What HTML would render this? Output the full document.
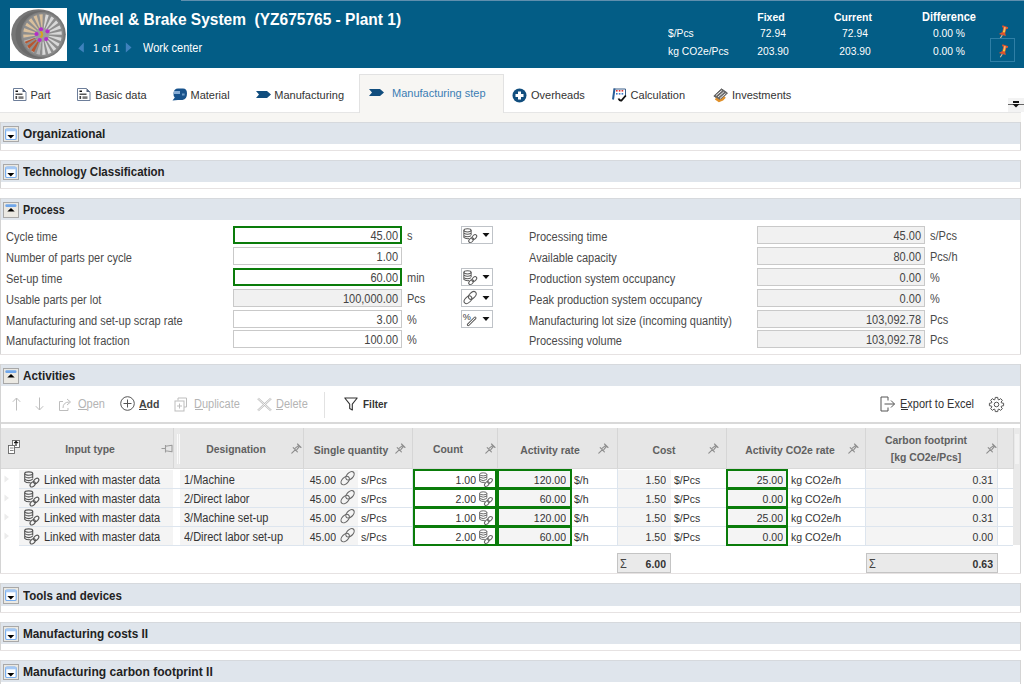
<!DOCTYPE html>
<html><head><meta charset="utf-8"><title>Manufacturing step</title>
<style>
html,body{margin:0;padding:0;}
body{width:1024px;height:684px;overflow:hidden;position:relative;background:#fff;font-family:"Liberation Sans", sans-serif;}
.t{position:absolute;white-space:nowrap;}
.r{position:absolute;}
svg.r{overflow:visible;}
</style></head><body>
<div class="r" style="left:0px;top:0px;width:1024px;height:68px;background:#035d86;"></div><div class="r" style="left:181px;top:0px;width:843px;height:1px;background:#5f8fae;"></div><div class="r" style="left:10px;top:8px;width:57px;height:53px;background:#fff;"></div><svg class="r" style="left:10px;top:8px;" width="57" height="53" viewBox="0 0 57 53"><g transform="translate(-10,-8)">
<ellipse cx="38.5" cy="34.2" rx="27.3" ry="25" fill="#767676"/>
<ellipse cx="39.5" cy="34.4" rx="24" ry="23.5" fill="#6a6a6a"/>
<ellipse cx="42.5" cy="34.6" rx="21.8" ry="22.8" fill="#7e7e7e"/>
<ellipse cx="42.5" cy="34.6" rx="20" ry="21" fill="#b4b4b4"/>
<path d="M43.60 27.41 L45.63 14.06 A20 20.8 0 0 1 39.37 55.14 L41.40 41.79 A7 7.28 0 0 0 43.60 27.41 Z" fill="#d8d8d8"/>
<path d="M35.59 35.74 L22.75 37.85 A20 20.8 0 0 1 45.63 14.06 L43.60 27.41 A7 7.28 0 0 0 35.59 35.74 Z" fill="#d9bf9c"/>
<path d="M39.56 42.34 L35.51 52.97 A19 19.76 0 0 1 24.83 41.87 L35.06 37.66 A8 8.32 0 0 0 39.56 42.34 Z" fill="#b8552e"/>
<path d="M49.00 34.53 L63.00 34.81 L62.77 37.79 L48.91 35.74 Z" fill="#8e8e8e"/><path d="M48.70 36.62 L61.93 41.39 L60.83 44.14 L48.25 37.75 Z" fill="#8e8e8e"/><path d="M47.80 38.52 L58.96 47.30 L57.10 49.57 L47.04 39.44 Z" fill="#8e8e8e"/><path d="M46.37 40.03 L54.38 51.97 L51.94 53.53 L45.38 40.66 Z" fill="#8e8e8e"/><path d="M44.57 41.01 L48.64 54.94 L45.85 55.63 L43.43 41.29 Z" fill="#8e8e8e"/><path d="M42.56 41.36 L42.30 55.92 L39.44 55.68 L41.40 41.26 Z" fill="#8e8e8e"/><path d="M40.55 41.05 L35.97 54.81 L33.32 53.66 L39.47 40.58 Z" fill="#8e8e8e"/><path d="M38.73 40.11 L30.29 51.72 L28.11 49.78 L37.84 39.32 Z" fill="#8e8e8e"/><path d="M37.28 38.63 L25.80 46.96 L24.30 44.41 L36.67 37.59 Z" fill="#8e8e8e"/><path d="M36.34 36.75 L22.94 40.99 L22.28 38.08 L36.07 35.57 Z" fill="#8e8e8e"/><path d="M36.00 34.67 L22.00 34.39 L22.23 31.41 L36.09 33.46 Z" fill="#8e8e8e"/><path d="M36.30 32.58 L23.07 27.81 L24.17 25.06 L36.75 31.45 Z" fill="#8e8e8e"/><path d="M37.20 30.68 L26.04 21.90 L27.90 19.63 L37.96 29.76 Z" fill="#8e8e8e"/><path d="M38.63 29.17 L30.62 17.23 L33.06 15.67 L39.62 28.54 Z" fill="#8e8e8e"/><path d="M40.43 28.19 L36.36 14.26 L39.15 13.57 L41.57 27.91 Z" fill="#8e8e8e"/><path d="M42.44 27.84 L42.70 13.28 L45.56 13.52 L43.60 27.94 Z" fill="#8e8e8e"/><path d="M44.45 28.15 L49.03 14.39 L51.68 15.54 L45.53 28.62 Z" fill="#8e8e8e"/><path d="M46.27 29.09 L54.71 17.48 L56.89 19.42 L47.16 29.88 Z" fill="#8e8e8e"/><path d="M47.72 30.57 L59.20 22.24 L60.70 24.79 L48.33 31.61 Z" fill="#8e8e8e"/><path d="M48.66 32.45 L62.06 28.21 L62.72 31.12 L48.93 33.63 Z" fill="#8e8e8e"/>
<ellipse cx="42.5" cy="34.6" rx="20" ry="21" fill="none" stroke="#8a8a8a" stroke-width="1.4"/>
<circle cx="42.0" cy="34.6" r="7" fill="#9c9c9c"/>
<circle cx="41" cy="29.3" r="2.1" fill="#b42cc8"/><circle cx="47.5" cy="31.3" r="2.1" fill="#b42cc8"/><circle cx="46.2" cy="39" r="2.1" fill="#b42cc8"/><circle cx="39.6" cy="40" r="2.1" fill="#b42cc8"/><circle cx="36.5" cy="34" r="2.1" fill="#b42cc8"/>
<path d="M40.5 31.5 Q44 34.5 40.5 37.5" stroke="#d8a020" stroke-width="2" fill="none"/>
</g></svg><div class="t" style="top:9px;font-size:16.0px;line-height:22px;color:#fff;font-weight:bold;left:77.5px;transform-origin:0 0;transform:scaleX(0.9688);">Wheel &amp; Brake System  (YZ675765 - Plant 1)</div><svg class="r" style="left:78px;top:42px;" width="7" height="11" viewBox="0 0 7 11"><path d="M5.8 0.5 L0.3 6.5 L5.8 10.5 Z" fill="#3f82bd"/></svg><svg class="r" style="left:125px;top:42px;" width="7" height="11" viewBox="0 0 7 11"><path d="M0.8 0.5 L6.5 5.5 L0.8 10.5 Z" fill="#3f82bd"/></svg><div class="t" style="top:40px;font-size:11.5px;line-height:16px;color:#fff;left:92.5px;transform-origin:0 0;transform:scaleX(0.9130);">1 of 1</div><div class="t" style="top:40px;font-size:12.0px;line-height:17px;color:#fff;left:143px;transform-origin:0 0;transform:scaleX(0.9167);">Work center</div><div class="t" style="top:9px;font-size:11.5px;line-height:16px;color:#fff;font-weight:bold;left:721.0px;width:100px;text-align:center;transform-origin:50% 0;transform:scaleX(0.9130);">Fixed</div><div class="t" style="top:9px;font-size:11.5px;line-height:16px;color:#fff;font-weight:bold;left:802.5px;width:100px;text-align:center;transform-origin:50% 0;transform:scaleX(0.9130);">Current</div><div class="t" style="top:9px;font-size:12.0px;line-height:17px;color:#fff;font-weight:bold;left:899.0px;width:100px;text-align:center;transform-origin:50% 0;transform:scaleX(0.9167);">Difference</div><div class="t" style="top:25px;font-size:11.25px;line-height:16px;color:#fff;left:667.5px;transform-origin:0 0;transform:scaleX(0.9156);">$/Pcs</div><div class="t" style="top:43px;font-size:11.25px;line-height:16px;color:#fff;left:667.5px;transform-origin:0 0;transform:scaleX(0.9156);">kg CO2e/Pcs</div><div class="t" style="top:25px;font-size:11.25px;line-height:16px;color:#fff;left:722.5px;width:100px;text-align:center;transform-origin:50% 0;transform:scaleX(0.9156);">72.94</div><div class="t" style="top:43px;font-size:11.25px;line-height:16px;color:#fff;left:722.5px;width:100px;text-align:center;transform-origin:50% 0;transform:scaleX(0.9156);">203.90</div><div class="t" style="top:25px;font-size:11.25px;line-height:16px;color:#fff;left:804.5px;width:100px;text-align:center;transform-origin:50% 0;transform:scaleX(0.9156);">72.94</div><div class="t" style="top:43px;font-size:11.25px;line-height:16px;color:#fff;left:804.5px;width:100px;text-align:center;transform-origin:50% 0;transform:scaleX(0.9156);">203.90</div><div class="t" style="top:25px;font-size:11.25px;line-height:16px;color:#fff;left:899.0px;width:100px;text-align:center;transform-origin:50% 0;transform:scaleX(0.9156);">0.00 %</div><div class="t" style="top:43px;font-size:11.25px;line-height:16px;color:#fff;left:899.0px;width:100px;text-align:center;transform-origin:50% 0;transform:scaleX(0.9156);">0.00 %</div><svg class="r" style="left:994px;top:22px;" width="18" height="18" viewBox="0 0 18 18"><path d="M8.3 13 L6.3 16.2" stroke="#dcb898" stroke-width="1.1"/><path d="M8.5 3.2 L14.2 5.2 L13.6 7 L12.3 7 L11.2 11 L11.8 14 L4.8 12 L8.4 10 L9.2 5.8 L8 5 Z" fill="#e0552c"/><path d="M11 5.2 L10.1 9.8" stroke="#e6c17c" stroke-width="1.6"/><circle cx="10" cy="9.5" r="1.1" fill="#eed040"/></svg><div class="r" style="left:990px;top:38px;width:25px;height:24px;border:1px solid #2f7fa6;box-sizing:border-box;"></div><svg class="r" style="left:994px;top:40.5px;" width="18" height="18" viewBox="0 0 18 18"><path d="M8.3 13 L6.3 16.2" stroke="#dcb898" stroke-width="1.1"/><path d="M8.5 3.2 L14.2 5.2 L13.6 7 L12.3 7 L11.2 11 L11.8 14 L4.8 12 L8.4 10 L9.2 5.8 L8 5 Z" fill="#e0552c"/><path d="M11 5.2 L10.1 9.8" stroke="#e6c17c" stroke-width="1.6"/><circle cx="10" cy="9.5" r="1.1" fill="#eed040"/></svg><div class="r" style="left:0px;top:68px;width:1024px;height:44px;background:#fff;"></div><div class="r" style="left:0px;top:112px;width:1024px;height:1px;background:#e6e6e6;"></div><div class="r" style="left:0px;top:113px;width:1021px;height:9px;background:#f7f6f3;"></div><div class="r" style="left:359px;top:74px;width:145px;height:39px;background:#f7f6f3;border:1px solid #e2e2e2;border-bottom:none;box-sizing:border-box;"></div><svg class="r" style="left:12.5px;top:88px;" width="14" height="13" viewBox="0 0 14 13"><path d="M0.5 0.5 H9.5 L13 4 V12.5 H0.5 Z" fill="#fff" stroke="#6d7e9a" stroke-width="1"/><path d="M9.5 0.5 L13 4 H9.5 Z" fill="#56647c"/><rect x="2.5" y="2.5" width="2.5" height="1.5" fill="#111"/><rect x="2.5" y="5.5" width="7" height="1.5" fill="#555"/><rect x="2.5" y="8" width="1.6" height="3" fill="#444"/><rect x="5.5" y="8.3" width="5" height="2.6" fill="#777"/></svg><div class="t" style="top:88px;font-size:11.0px;line-height:15px;color:#333;left:30.5px;transform-origin:0 0;">Part</div><svg class="r" style="left:76.5px;top:88px;" width="14" height="13" viewBox="0 0 14 13"><path d="M0.5 0.5 H9.5 L13 4 V12.5 H0.5 Z" fill="#fff" stroke="#6d7e9a" stroke-width="1"/><path d="M9.5 0.5 L13 4 H9.5 Z" fill="#56647c"/><rect x="2.5" y="2.5" width="2.5" height="1.5" fill="#111"/><rect x="2.5" y="5.5" width="7" height="1.5" fill="#555"/><rect x="2.5" y="8" width="1.6" height="3" fill="#444"/><rect x="5.5" y="8.3" width="5" height="2.6" fill="#777"/></svg><div class="t" style="top:88px;font-size:11.0px;line-height:15px;color:#333;left:95.3px;transform-origin:0 0;">Basic data</div><svg class="r" style="left:172px;top:88px;" width="15" height="13" viewBox="0 0 15 13"><path d="M6 0.5 H11 Q15 0.5 15 5.5 Q15 11 10.5 12 H6 L0.5 12.5 L2.8 9.5 Q1.2 8 1.5 5 Q2 0.5 6 0.5 Z" fill="#17528c"/><rect x="2" y="3" width="6" height="3" fill="#86acd6"/><rect x="10" y="5.5" width="2.6" height="2" fill="#6f9cc8"/></svg><div class="t" style="top:88px;font-size:11.0px;line-height:15px;color:#333;left:190.5px;transform-origin:0 0;">Material</div><svg class="r" style="left:255.5px;top:91px;" width="15" height="7" viewBox="0 0 15 7"><path d="M0 0 H11 L15 3.5 L11 7 H0 L3 3.5 Z" fill="#114e7e"/></svg><div class="t" style="top:88px;font-size:11.0px;line-height:15px;color:#333;left:274.3px;transform-origin:0 0;">Manufacturing</div><svg class="r" style="left:369.3px;top:89px;" width="15" height="7" viewBox="0 0 15 7"><path d="M0 0 H11 L15 3.5 L11 7 H0 L3 3.5 Z" fill="#114e7e"/></svg><div class="t" style="top:86px;font-size:11.0px;line-height:15px;color:#3b7db4;left:392px;transform-origin:0 0;">Manufacturing step</div><svg class="r" style="left:512px;top:88px;" width="15" height="15" viewBox="0 0 15 15"><circle cx="7.5" cy="7.5" r="7" fill="#114e7e"/><path d="M6 3.5 H9 V6 H11.5 V9 H9 V11.5 H6 V9 H3.5 V6 H6 Z" fill="#fff"/></svg><div class="t" style="top:88px;font-size:11.0px;line-height:15px;color:#333;left:531px;transform-origin:0 0;">Overheads</div><svg class="r" style="left:612px;top:88px;" width="15" height="14" viewBox="0 0 15 14"><path d="M2.5 0.5 L1 11.5" stroke="#2a5e9a" stroke-width="2"/><path d="M1.8 1 H13.5 V9" stroke="#3a5f8a" stroke-width="1" fill="none"/><rect x="4" y="2" width="1.6" height="1.6" fill="#d33"/><rect x="6.8" y="2" width="1.6" height="1.6" fill="#d33"/><rect x="9.6" y="2" width="1.6" height="1.6" fill="#d33"/><rect x="4" y="5" width="1.6" height="1.6" fill="#3a78c8"/><rect x="6.8" y="5" width="1.6" height="1.6" fill="#3a78c8"/><rect x="9.6" y="5" width="1.6" height="1.6" fill="#3a78c8"/><path d="M6.5 10.5 Q7.5 13 9.5 12.5 L13.8 7.5" stroke="#111" stroke-width="1.9" fill="none"/></svg><div class="t" style="top:88px;font-size:11.0px;line-height:15px;color:#333;left:630.6px;transform-origin:0 0;">Calculation</div><svg class="r" style="left:712.5px;top:87.5px;" width="15" height="14" viewBox="0 0 15 14"><path d="M0.8 8 L8.5 0.8 L14.5 5 L7 12.5 Z" fill="#6a6a6a" stroke="#555" stroke-width="0.8"/><path d="M3 7.5 L8.8 2.5 M5 9 L10.8 4 M7 10.5 L12.5 5.5" stroke="#f2f2f2" stroke-width="1"/><path d="M2.5 10.5 L6 13 L9.5 11.5 L12 9" stroke="#e0902a" stroke-width="2.2" fill="none"/></svg><div class="t" style="top:88px;font-size:11.0px;line-height:15px;color:#333;left:732px;transform-origin:0 0;">Investments</div><div class="r" style="left:1008px;top:98px;width:16px;height:14px;background:#f3f3f3;"></div><div class="r" style="left:1013px;top:101px;width:6px;height:2px;background:#111;"></div><div class="r" style="left:1008px;top:104px;width:16px;height:1px;background:#666;"></div><svg class="r" style="left:1012px;top:104px;" width="8" height="4" viewBox="0 0 8 4"><path d="M0.5 0 H7.5 L4 3.5 Z" fill="#111"/></svg><div class="r" style="left:1021px;top:112px;width:3px;height:572px;background:#fff;"></div><div class="r" style="left:0px;top:122px;width:1021px;height:1px;background:#d6d9dd;"></div><div class="r" style="left:0px;top:123px;width:1021px;height:21px;background:#dfe5ec;"></div><div class="r" style="left:0px;top:144px;width:1021px;height:6px;background:#fff;"></div><div class="r" style="left:0px;top:122px;width:1px;height:28px;background:#d4d4d4;"></div><div class="r" style="left:1020px;top:122px;width:1px;height:28px;background:#d4d4d4;"></div><div class="r" style="left:0px;top:150px;width:1021px;height:1px;background:#e6e2e2;"></div><div class="r" style="left:3px;top:126px;width:16px;height:16px;background:#ebe9e3;border:1px solid #a8a8a8;box-sizing:border-box;"></div><svg class="r" style="left:3px;top:126px;" width="16" height="16" viewBox="0 0 16 16"><rect x="2.6" y="3.1" width="10.6" height="10.4" rx="1.3" fill="#fff" stroke="#78aef0" stroke-width="1.2"/><rect x="2.6" y="3.1" width="10.6" height="2.2" fill="#a6c9f4"/><path d="M4.3 9 H11.3 L7.8 12.6 Z" fill="#000"/></svg><div class="t" style="top:125px;font-size:12.5px;line-height:18px;color:#222;font-weight:bold;left:23px;transform-origin:0 0;transform:scaleX(0.9476);">Organizational</div><div class="r" style="left:0px;top:160px;width:1021px;height:1px;background:#d6d9dd;"></div><div class="r" style="left:0px;top:161px;width:1021px;height:21px;background:#dfe5ec;"></div><div class="r" style="left:0px;top:182px;width:1021px;height:6px;background:#fff;"></div><div class="r" style="left:0px;top:160px;width:1px;height:28px;background:#d4d4d4;"></div><div class="r" style="left:1020px;top:160px;width:1px;height:28px;background:#d4d4d4;"></div><div class="r" style="left:0px;top:188px;width:1021px;height:1px;background:#e6e2e2;"></div><div class="r" style="left:3px;top:164px;width:16px;height:16px;background:#ebe9e3;border:1px solid #a8a8a8;box-sizing:border-box;"></div><svg class="r" style="left:3px;top:164px;" width="16" height="16" viewBox="0 0 16 16"><rect x="2.6" y="3.1" width="10.6" height="10.4" rx="1.3" fill="#fff" stroke="#78aef0" stroke-width="1.2"/><rect x="2.6" y="3.1" width="10.6" height="2.2" fill="#a6c9f4"/><path d="M4.3 9 H11.3 L7.8 12.6 Z" fill="#000"/></svg><div class="t" style="top:163px;font-size:12.5px;line-height:18px;color:#222;font-weight:bold;left:23px;transform-origin:0 0;transform:scaleX(0.9200);">Technology Classification</div><div class="r" style="left:0px;top:198px;width:1021px;height:1px;background:#d6d9dd;"></div><div class="r" style="left:0px;top:199px;width:1021px;height:21px;background:#dfe5ec;"></div><div class="r" style="left:0px;top:220px;width:1021px;height:134px;background:#fff;"></div><div class="r" style="left:0px;top:198px;width:1px;height:156px;background:#d4d4d4;"></div><div class="r" style="left:1020px;top:198px;width:1px;height:156px;background:#d4d4d4;"></div><div class="r" style="left:0px;top:354px;width:1021px;height:1px;background:#e6e2e2;"></div><div class="r" style="left:3px;top:202px;width:16px;height:16px;background:#ebe9e3;border:1px solid #a8a8a8;box-sizing:border-box;"></div><svg class="r" style="left:3px;top:202px;" width="16" height="16" viewBox="0 0 16 16"><rect x="2.3" y="2.3" width="11.2" height="2.6" rx="1.2" fill="#6fa6ea"/><path d="M4.3 9.6 H11.7 L8 6 Z" fill="#000"/></svg><div class="t" style="top:201px;font-size:12.5px;line-height:18px;color:#222;font-weight:bold;left:23px;transform-origin:0 0;transform:scaleX(0.8556);">Process</div><div class="r" style="left:0px;top:364px;width:1021px;height:1px;background:#d6d9dd;"></div><div class="r" style="left:0px;top:365px;width:1021px;height:21px;background:#dfe5ec;"></div><div class="r" style="left:0px;top:386px;width:1021px;height:187px;background:#fff;"></div><div class="r" style="left:0px;top:364px;width:1px;height:209px;background:#d4d4d4;"></div><div class="r" style="left:1020px;top:364px;width:1px;height:209px;background:#d4d4d4;"></div><div class="r" style="left:0px;top:573px;width:1021px;height:1px;background:#e6e2e2;"></div><div class="r" style="left:3px;top:368px;width:16px;height:16px;background:#ebe9e3;border:1px solid #a8a8a8;box-sizing:border-box;"></div><svg class="r" style="left:3px;top:368px;" width="16" height="16" viewBox="0 0 16 16"><rect x="2.3" y="2.3" width="11.2" height="2.6" rx="1.2" fill="#6fa6ea"/><path d="M4.3 9.6 H11.7 L8 6 Z" fill="#000"/></svg><div class="t" style="top:367px;font-size:12.5px;line-height:18px;color:#222;font-weight:bold;left:23px;transform-origin:0 0;transform:scaleX(0.9384);">Activities</div><div class="r" style="left:0px;top:583px;width:1021px;height:1px;background:#d6d9dd;"></div><div class="r" style="left:0px;top:584px;width:1021px;height:22px;background:#dfe5ec;"></div><div class="r" style="left:0px;top:606px;width:1021px;height:6px;background:#fff;"></div><div class="r" style="left:0px;top:583px;width:1px;height:29px;background:#d4d4d4;"></div><div class="r" style="left:1020px;top:583px;width:1px;height:29px;background:#d4d4d4;"></div><div class="r" style="left:0px;top:612px;width:1021px;height:1px;background:#e6e2e2;"></div><div class="r" style="left:3px;top:587px;width:16px;height:17px;background:#ebe9e3;border:1px solid #a8a8a8;box-sizing:border-box;"></div><svg class="r" style="left:3px;top:587px;" width="16" height="16" viewBox="0 0 16 16"><rect x="2.6" y="3.1" width="10.6" height="10.4" rx="1.3" fill="#fff" stroke="#78aef0" stroke-width="1.2"/><rect x="2.6" y="3.1" width="10.6" height="2.2" fill="#a6c9f4"/><path d="M4.3 9 H11.3 L7.8 12.6 Z" fill="#000"/></svg><div class="t" style="top:587px;font-size:12.5px;line-height:18px;color:#222;font-weight:bold;left:23px;transform-origin:0 0;transform:scaleX(0.9200);">Tools and devices</div><div class="r" style="left:0px;top:622px;width:1021px;height:1px;background:#d6d9dd;"></div><div class="r" style="left:0px;top:623px;width:1021px;height:21px;background:#dfe5ec;"></div><div class="r" style="left:0px;top:644px;width:1021px;height:6px;background:#fff;"></div><div class="r" style="left:0px;top:622px;width:1px;height:28px;background:#d4d4d4;"></div><div class="r" style="left:1020px;top:622px;width:1px;height:28px;background:#d4d4d4;"></div><div class="r" style="left:0px;top:650px;width:1021px;height:1px;background:#e6e2e2;"></div><div class="r" style="left:3px;top:626px;width:16px;height:16px;background:#ebe9e3;border:1px solid #a8a8a8;box-sizing:border-box;"></div><svg class="r" style="left:3px;top:626px;" width="16" height="16" viewBox="0 0 16 16"><rect x="2.6" y="3.1" width="10.6" height="10.4" rx="1.3" fill="#fff" stroke="#78aef0" stroke-width="1.2"/><rect x="2.6" y="3.1" width="10.6" height="2.2" fill="#a6c9f4"/><path d="M4.3 9 H11.3 L7.8 12.6 Z" fill="#000"/></svg><div class="t" style="top:625px;font-size:12.5px;line-height:18px;color:#222;font-weight:bold;left:23px;transform-origin:0 0;transform:scaleX(0.9430);">Manufacturing costs II</div><div class="r" style="left:0px;top:660px;width:1021px;height:1px;background:#d6d9dd;"></div><div class="r" style="left:0px;top:661px;width:1021px;height:21px;background:#dfe5ec;"></div><div class="r" style="left:0px;top:682px;width:1021px;height:6px;background:#fff;"></div><div class="r" style="left:0px;top:660px;width:1px;height:28px;background:#d4d4d4;"></div><div class="r" style="left:1020px;top:660px;width:1px;height:28px;background:#d4d4d4;"></div><div class="r" style="left:0px;top:688px;width:1021px;height:1px;background:#e6e2e2;"></div><div class="r" style="left:3px;top:664px;width:16px;height:16px;background:#ebe9e3;border:1px solid #a8a8a8;box-sizing:border-box;"></div><svg class="r" style="left:3px;top:664px;" width="16" height="16" viewBox="0 0 16 16"><rect x="2.6" y="3.1" width="10.6" height="10.4" rx="1.3" fill="#fff" stroke="#78aef0" stroke-width="1.2"/><rect x="2.6" y="3.1" width="10.6" height="2.2" fill="#a6c9f4"/><path d="M4.3 9 H11.3 L7.8 12.6 Z" fill="#000"/></svg><div class="t" style="top:663px;font-size:12.5px;line-height:18px;color:#222;font-weight:bold;left:23px;transform-origin:0 0;transform:scaleX(0.9660);">Manufacturing carbon footprint II</div><div class="t" style="top:229px;font-size:12.0px;line-height:17px;color:#4a4a4a;left:5.5px;transform-origin:0 0;transform:scaleX(0.9167);">Cycle time</div><div class="r" style="left:233px;top:226px;width:169px;height:18px;background:#fff;border:2px solid #0a7c0a;box-sizing:border-box;"></div><div class="t" style="top:228px;font-size:12.0px;line-height:17px;color:#444;left:238px;width:160px;text-align:right;transform-origin:100% 0;transform:scaleX(0.9167);">45.00</div><div class="t" style="top:228px;font-size:12.0px;line-height:17px;color:#4a4a4a;left:407px;transform-origin:0 0;transform:scaleX(0.9167);">s</div><div class="r" style="left:461px;top:226px;width:32px;height:18px;background:#fff;border:1px solid #bfc3c8;box-sizing:border-box;"></div><svg class="r" style="left:463px;top:227.5px;" width="15" height="15.5" viewBox="0 0 16 17"><g fill="none" stroke="#5a5a5a" stroke-width="1.1"><ellipse cx="4.7" cy="2.6" rx="4" ry="1.7"/><path d="M0.7 2.6 V10.3 Q2.5 12 6.5 11.6 M8.7 2.6 V7.6 M0.7 5.6 Q4.7 8.2 8.7 5.6 M0.7 8.3 Q4.7 10.9 8.7 8.3"/><ellipse cx="8.7" cy="13.4" rx="3.1" ry="2" transform="rotate(-45 8.7 13.4)"/><ellipse cx="12.2" cy="9.9" rx="3.1" ry="2" transform="rotate(-45 12.2 9.9)"/></g></svg><svg class="r" style="left:482px;top:233px;" width="8" height="4" viewBox="0 0 8 4"><path d="M0.5 0 H7.5 L4 4 Z" fill="#111"/></svg><div class="t" style="top:250px;font-size:12.0px;line-height:17px;color:#4a4a4a;left:5.5px;transform-origin:0 0;transform:scaleX(0.9167);">Number of parts per cycle</div><div class="r" style="left:233px;top:247px;width:169px;height:18px;background:#fff;border:1px solid #c9c9c9;box-sizing:border-box;"></div><div class="t" style="top:249px;font-size:12.0px;line-height:17px;color:#444;left:238px;width:160px;text-align:right;transform-origin:100% 0;transform:scaleX(0.9167);">1.00</div><div class="t" style="top:271px;font-size:12.0px;line-height:17px;color:#4a4a4a;left:5.5px;transform-origin:0 0;transform:scaleX(0.9167);">Set-up time</div><div class="r" style="left:233px;top:268px;width:169px;height:18px;background:#fff;border:2px solid #0a7c0a;box-sizing:border-box;"></div><div class="t" style="top:270px;font-size:12.0px;line-height:17px;color:#444;left:238px;width:160px;text-align:right;transform-origin:100% 0;transform:scaleX(0.9167);">60.00</div><div class="t" style="top:270px;font-size:12.0px;line-height:17px;color:#4a4a4a;left:407px;transform-origin:0 0;transform:scaleX(0.9167);">min</div><div class="r" style="left:461px;top:268px;width:32px;height:18px;background:#fff;border:1px solid #bfc3c8;box-sizing:border-box;"></div><svg class="r" style="left:463px;top:269.5px;" width="15" height="15.5" viewBox="0 0 16 17"><g fill="none" stroke="#5a5a5a" stroke-width="1.1"><ellipse cx="4.7" cy="2.6" rx="4" ry="1.7"/><path d="M0.7 2.6 V10.3 Q2.5 12 6.5 11.6 M8.7 2.6 V7.6 M0.7 5.6 Q4.7 8.2 8.7 5.6 M0.7 8.3 Q4.7 10.9 8.7 8.3"/><ellipse cx="8.7" cy="13.4" rx="3.1" ry="2" transform="rotate(-45 8.7 13.4)"/><ellipse cx="12.2" cy="9.9" rx="3.1" ry="2" transform="rotate(-45 12.2 9.9)"/></g></svg><svg class="r" style="left:482px;top:275px;" width="8" height="4" viewBox="0 0 8 4"><path d="M0.5 0 H7.5 L4 4 Z" fill="#111"/></svg><div class="t" style="top:292px;font-size:12.0px;line-height:17px;color:#4a4a4a;left:5.5px;transform-origin:0 0;transform:scaleX(0.9167);">Usable parts per lot</div><div class="r" style="left:233px;top:289px;width:169px;height:18px;background:#f1f1f1;border:1px solid #c9c9c9;box-sizing:border-box;"></div><div class="t" style="top:291px;font-size:12.0px;line-height:17px;color:#444;left:238px;width:160px;text-align:right;transform-origin:100% 0;transform:scaleX(0.9167);">100,000.00</div><div class="t" style="top:291px;font-size:12.0px;line-height:17px;color:#4a4a4a;left:407px;transform-origin:0 0;transform:scaleX(0.9167);">Pcs</div><div class="r" style="left:461px;top:289px;width:32px;height:18px;background:#fff;border:1px solid #bfc3c8;box-sizing:border-box;"></div><svg class="r" style="left:463px;top:290.5px;" width="15" height="15.5" viewBox="0 0 16 17"><g fill="none" stroke="#5a5a5a" stroke-width="1.15"><ellipse cx="5.2" cy="9.6" rx="5" ry="3.1" transform="rotate(-45 5.2 9.6)"/><ellipse cx="10" cy="4.8" rx="5" ry="3.1" transform="rotate(-45 10 4.8)"/></g></svg><svg class="r" style="left:482px;top:296px;" width="8" height="4" viewBox="0 0 8 4"><path d="M0.5 0 H7.5 L4 4 Z" fill="#111"/></svg><div class="t" style="top:313px;font-size:12.0px;line-height:17px;color:#4a4a4a;left:5.5px;transform-origin:0 0;transform:scaleX(0.9167);">Manufacturing and set-up scrap rate</div><div class="r" style="left:233px;top:310px;width:169px;height:18px;background:#fff;border:1px solid #c9c9c9;box-sizing:border-box;"></div><div class="t" style="top:312px;font-size:12.0px;line-height:17px;color:#444;left:238px;width:160px;text-align:right;transform-origin:100% 0;transform:scaleX(0.9167);">3.00</div><div class="t" style="top:312px;font-size:12.0px;line-height:17px;color:#4a4a4a;left:407px;transform-origin:0 0;transform:scaleX(0.9167);">%</div><div class="r" style="left:461px;top:310px;width:32px;height:18px;background:#fff;border:1px solid #bfc3c8;box-sizing:border-box;"></div><svg class="r" style="left:463px;top:311.5px;" width="15" height="15.5" viewBox="0 0 16 17"><text x="-0.5" y="8.5" font-size="10" font-family="Liberation Sans" fill="#333">%</text><path d="M5.5 14 L13 6.5" stroke="#444" stroke-width="3" stroke-linecap="round"/><path d="M5.5 14 L13 6.5" stroke="#fff" stroke-width="1.2" stroke-linecap="round"/></svg><svg class="r" style="left:482px;top:317px;" width="8" height="4" viewBox="0 0 8 4"><path d="M0.5 0 H7.5 L4 4 Z" fill="#111"/></svg><div class="t" style="top:333px;font-size:12.0px;line-height:17px;color:#4a4a4a;left:5.5px;transform-origin:0 0;transform:scaleX(0.9167);">Manufacturing lot fraction</div><div class="r" style="left:233px;top:330px;width:169px;height:18px;background:#fff;border:1px solid #c9c9c9;box-sizing:border-box;"></div><div class="t" style="top:332px;font-size:12.0px;line-height:17px;color:#444;left:238px;width:160px;text-align:right;transform-origin:100% 0;transform:scaleX(0.9167);">100.00</div><div class="t" style="top:332px;font-size:12.0px;line-height:17px;color:#4a4a4a;left:407px;transform-origin:0 0;transform:scaleX(0.9167);">%</div><div class="t" style="top:229px;font-size:12.0px;line-height:17px;color:#4a4a4a;left:529px;transform-origin:0 0;transform:scaleX(0.9167);">Processing time</div><div class="r" style="left:757px;top:226px;width:168px;height:18px;background:#f1f1f1;border:1px solid #c9c9c9;box-sizing:border-box;"></div><div class="t" style="top:228px;font-size:12.0px;line-height:17px;color:#444;left:761px;width:160px;text-align:right;transform-origin:100% 0;transform:scaleX(0.9167);">45.00</div><div class="t" style="top:228px;font-size:12.0px;line-height:17px;color:#4a4a4a;left:930px;transform-origin:0 0;transform:scaleX(0.9167);">s/Pcs</div><div class="t" style="top:250px;font-size:12.0px;line-height:17px;color:#4a4a4a;left:529px;transform-origin:0 0;transform:scaleX(0.9167);">Available capacity</div><div class="r" style="left:757px;top:247px;width:168px;height:18px;background:#f1f1f1;border:1px solid #c9c9c9;box-sizing:border-box;"></div><div class="t" style="top:249px;font-size:12.0px;line-height:17px;color:#444;left:761px;width:160px;text-align:right;transform-origin:100% 0;transform:scaleX(0.9167);">80.00</div><div class="t" style="top:249px;font-size:12.0px;line-height:17px;color:#4a4a4a;left:930px;transform-origin:0 0;transform:scaleX(0.9167);">Pcs/h</div><div class="t" style="top:271px;font-size:12.0px;line-height:17px;color:#4a4a4a;left:529px;transform-origin:0 0;transform:scaleX(0.9167);">Production system occupancy</div><div class="r" style="left:757px;top:268px;width:168px;height:18px;background:#f1f1f1;border:1px solid #c9c9c9;box-sizing:border-box;"></div><div class="t" style="top:270px;font-size:12.0px;line-height:17px;color:#444;left:761px;width:160px;text-align:right;transform-origin:100% 0;transform:scaleX(0.9167);">0.00</div><div class="t" style="top:270px;font-size:12.0px;line-height:17px;color:#4a4a4a;left:930px;transform-origin:0 0;transform:scaleX(0.9167);">%</div><div class="t" style="top:292px;font-size:12.0px;line-height:17px;color:#4a4a4a;left:529px;transform-origin:0 0;transform:scaleX(0.9167);">Peak production system occupancy</div><div class="r" style="left:757px;top:289px;width:168px;height:18px;background:#f1f1f1;border:1px solid #c9c9c9;box-sizing:border-box;"></div><div class="t" style="top:291px;font-size:12.0px;line-height:17px;color:#444;left:761px;width:160px;text-align:right;transform-origin:100% 0;transform:scaleX(0.9167);">0.00</div><div class="t" style="top:291px;font-size:12.0px;line-height:17px;color:#4a4a4a;left:930px;transform-origin:0 0;transform:scaleX(0.9167);">%</div><div class="t" style="top:313px;font-size:12.0px;line-height:17px;color:#4a4a4a;left:529px;transform-origin:0 0;transform:scaleX(0.9167);">Manufacturing lot size (incoming quantity)</div><div class="r" style="left:757px;top:310px;width:168px;height:18px;background:#f1f1f1;border:1px solid #c9c9c9;box-sizing:border-box;"></div><div class="t" style="top:312px;font-size:12.0px;line-height:17px;color:#444;left:761px;width:160px;text-align:right;transform-origin:100% 0;transform:scaleX(0.9167);">103,092.78</div><div class="t" style="top:312px;font-size:12.0px;line-height:17px;color:#4a4a4a;left:930px;transform-origin:0 0;transform:scaleX(0.9167);">Pcs</div><div class="t" style="top:333px;font-size:12.0px;line-height:17px;color:#4a4a4a;left:529px;transform-origin:0 0;transform:scaleX(0.9167);">Processing volume</div><div class="r" style="left:757px;top:330px;width:168px;height:18px;background:#f1f1f1;border:1px solid #c9c9c9;box-sizing:border-box;"></div><div class="t" style="top:332px;font-size:12.0px;line-height:17px;color:#444;left:761px;width:160px;text-align:right;transform-origin:100% 0;transform:scaleX(0.9167);">103,092.78</div><div class="t" style="top:332px;font-size:12.0px;line-height:17px;color:#4a4a4a;left:930px;transform-origin:0 0;transform:scaleX(0.9167);">Pcs</div><svg class="r" style="left:12px;top:397px;" width="9" height="14" viewBox="0 0 9 14"><path d="M4.5 1 V13.5 M0.8 4.8 L4.5 1 L8.2 4.8" fill="none" stroke="#bdbdbd" stroke-width="1"/></svg><svg class="r" style="left:35px;top:397px;" width="9" height="14" viewBox="0 0 9 14"><path d="M4.5 0.5 V13 M0.8 9.2 L4.5 13 L8.2 9.2" fill="none" stroke="#bdbdbd" stroke-width="1"/></svg><svg class="r" style="left:58px;top:397px;" width="16" height="15" viewBox="0 0 16 15"><path d="M5 4.5 H1.5 V13.5 H10 V11" fill="none" stroke="#bdbdbd" stroke-width="1"/><path d="M5 11 Q5 5 11.5 5 M9 2 L12.5 5 L9 8" fill="none" stroke="#bdbdbd" stroke-width="1"/></svg><div class="t" style="top:396px;font-size:12.0px;line-height:17px;color:#b4b4b4;left:77.5px;transform-origin:0 0;transform:scaleX(0.9167);">Open</div><div class="r" style="left:78px;top:409px;width:9px;height:1px;background:#b4b4b4;"></div><svg class="r" style="left:120px;top:396px;" width="15" height="15" viewBox="0 0 15 15"><circle cx="7.5" cy="7.5" r="6.8" fill="none" stroke="#555" stroke-width="1"/><path d="M7.5 3.5 V11.5 M3.5 7.5 H11.5" stroke="#555" stroke-width="1"/></svg><div class="t" style="top:396px;font-size:11.5px;line-height:16px;color:#444;font-weight:bold;left:139px;transform-origin:0 0;transform:scaleX(0.9130);">Add</div><div class="r" style="left:139px;top:409px;width:8px;height:1px;background:#444;"></div><svg class="r" style="left:174px;top:397px;" width="16" height="15" viewBox="0 0 16 15"><path d="M4 3.5 V1 H12.5 V10 H10" fill="none" stroke="#bdbdbd" stroke-width="1"/><rect x="1" y="4" width="9" height="10" fill="none" stroke="#bdbdbd" stroke-width="1"/><path d="M5.5 6.5 V11.5 M3 9 H8" stroke="#bdbdbd" stroke-width="1"/></svg><div class="t" style="top:396px;font-size:12.0px;line-height:17px;color:#b4b4b4;left:194.3px;transform-origin:0 0;transform:scaleX(0.9167);">Duplicate</div><div class="r" style="left:195px;top:409px;width:8px;height:1px;background:#b4b4b4;"></div><svg class="r" style="left:257px;top:397px;" width="15" height="15" viewBox="0 0 15 15"><path d="M1 1.5 L14 13.5 M14 1.5 L1 13.5" stroke="#bdbdbd" stroke-width="2.2"/><path d="M1 1.5 L14 13.5 M14 1.5 L1 13.5" stroke="#fff" stroke-width="0.8"/></svg><div class="t" style="top:396px;font-size:12.0px;line-height:17px;color:#b4b4b4;left:275.8px;transform-origin:0 0;transform:scaleX(0.9167);">Delete</div><div class="r" style="left:276px;top:409px;width:7px;height:1px;background:#b4b4b4;"></div><div class="r" style="left:324px;top:392px;width:1px;height:26px;background:#e2e2e2;"></div><svg class="r" style="left:344px;top:397px;" width="14" height="14" viewBox="0 0 14 14"><path d="M0.8 1 H13.2 L8.3 7.2 V13 L5.7 11.5 V7.2 Z" fill="none" stroke="#333" stroke-width="1.1" stroke-linejoin="round"/></svg><div class="t" style="top:397px;font-size:11.0px;line-height:15px;color:#333;font-weight:bold;left:362.5px;transform-origin:0 0;transform:scaleX(0.9091);">Filter</div><svg class="r" style="left:880px;top:396px;" width="16" height="16" viewBox="0 0 16 16"><path d="M8 4.5 V1 H1 V15 H8 V11.5" fill="none" stroke="#555" stroke-width="1"/><path d="M4.5 8 H14.5 M11 4.5 L14.5 8 L11 11.5" fill="none" stroke="#555" stroke-width="1"/></svg><div class="t" style="top:396px;font-size:12.0px;line-height:17px;color:#333;left:900.2px;transform-origin:0 0;transform:scaleX(0.9167);">Export to Excel</div><div class="r" style="left:901px;top:409px;width:7px;height:1px;background:#333;"></div><svg class="r" style="left:989px;top:397px;" width="15" height="15" viewBox="0 0 15 15"><path d="M12.47 5.96 L14.60 6.28 L14.60 8.72 L12.47 9.04 L12.10 9.93 L13.38 11.66 L11.66 13.38 L9.93 12.10 L9.04 12.47 L8.72 14.60 L6.28 14.60 L5.96 12.47 L5.07 12.10 L3.34 13.38 L1.62 11.66 L2.90 9.93 L2.53 9.04 L0.40 8.72 L0.40 6.28 L2.53 5.96 L2.90 5.07 L1.62 3.34 L3.34 1.62 L5.07 2.90 L5.96 2.53 L6.28 0.40 L8.72 0.40 L9.04 2.53 L9.93 2.90 L11.66 1.62 L13.38 3.34 L12.10 5.07 Z" fill="#fff" stroke="#555" stroke-width="1" stroke-linejoin="round"/><circle cx="7.5" cy="7.5" r="2.3" fill="none" stroke="#555" stroke-width="1"/></svg><div class="r" style="left:1px;top:422px;width:1019px;height:2px;background:#d9d9d9;"></div><div class="r" style="left:1px;top:428px;width:1012px;height:41px;background:#e6e6e6;"></div><div class="r" style="left:1013px;top:428px;width:7px;height:117px;background:#e9e9e9;"></div><div class="r" style="left:1015px;top:434px;width:4px;height:30px;background:#f2f2f2;"></div><div class="r" style="left:173px;top:428px;width:1px;height:41px;background:#d6d6d6;"></div><div class="r" style="left:303px;top:428px;width:1px;height:41px;background:#d6d6d6;"></div><div class="r" style="left:412px;top:428px;width:1px;height:41px;background:#d6d6d6;"></div><div class="r" style="left:497px;top:428px;width:1px;height:41px;background:#d6d6d6;"></div><div class="r" style="left:617px;top:428px;width:1px;height:41px;background:#d6d6d6;"></div><div class="r" style="left:726px;top:428px;width:1px;height:41px;background:#d6d6d6;"></div><div class="r" style="left:865px;top:428px;width:1px;height:41px;background:#d6d6d6;"></div><div class="r" style="left:997px;top:428px;width:1px;height:41px;background:#d6d6d6;"></div><div class="r" style="left:1013px;top:428px;width:1px;height:41px;background:#d6d6d6;"></div><div class="r" style="left:174px;top:428px;width:6px;height:117px;background:#e9e9e9;"></div><div class="r" style="left:177px;top:434px;width:1px;height:30px;background:#fafafa;"></div><div class="r" style="left:179px;top:434px;width:1px;height:30px;background:#fafafa;"></div><svg class="r" style="left:8px;top:440px;" width="12" height="14" viewBox="0 0 12 14"><rect x="4.5" y="0.5" width="7" height="7" fill="#fff" stroke="#666" stroke-width="0.9"/><rect x="0.5" y="5.5" width="6" height="8" fill="#fff" stroke="#666" stroke-width="0.9"/><path d="M2 8 H5.5 M2 10.5 H5.5 M6 2.5 H10.5" stroke="#666" stroke-width="0.8"/><path d="M8 6 V1.5 M6.3 3.2 L8 1.3 L9.7 3.2" stroke="#111" stroke-width="1.1" fill="none"/></svg><div class="t" style="top:441px;font-size:11.25px;line-height:16px;color:#606060;font-weight:bold;left:19.5px;width:140px;text-align:center;transform-origin:50% 0;transform:scaleX(0.9244);">Input type</div><div class="t" style="top:441px;font-size:11.25px;line-height:16px;color:#606060;font-weight:bold;left:180.5px;width:110px;text-align:center;transform-origin:50% 0;transform:scaleX(0.9244);">Designation</div><div class="t" style="top:442px;font-size:11.25px;line-height:16px;color:#606060;font-weight:bold;left:296.0px;width:110px;text-align:center;transform-origin:50% 0;transform:scaleX(0.9244);">Single quantity</div><div class="t" style="top:441px;font-size:11.25px;line-height:16px;color:#606060;font-weight:bold;left:408.0px;width:80px;text-align:center;transform-origin:50% 0;transform:scaleX(0.9244);">Count</div><div class="t" style="top:442px;font-size:11.25px;line-height:16px;color:#606060;font-weight:bold;left:500.0px;width:100px;text-align:center;transform-origin:50% 0;transform:scaleX(0.9244);">Activity rate</div><div class="t" style="top:442px;font-size:11.25px;line-height:16px;color:#606060;font-weight:bold;left:624.0px;width:80px;text-align:center;transform-origin:50% 0;transform:scaleX(0.9244);">Cost</div><div class="t" style="top:442px;font-size:11.25px;line-height:16px;color:#606060;font-weight:bold;left:724.5px;width:130px;text-align:center;transform-origin:50% 0;transform:scaleX(0.9244);">Activity CO2e rate</div><div class="t" style="top:432px;font-size:11.25px;line-height:16px;color:#606060;font-weight:bold;left:860.5px;width:130px;text-align:center;transform-origin:50% 0;transform:scaleX(0.9244);">Carbon footprint</div><div class="t" style="top:449px;font-size:11.25px;line-height:16px;color:#606060;font-weight:bold;left:860.5px;width:130px;text-align:center;transform-origin:50% 0;transform:scaleX(0.9244);">[kg CO2e/Pcs]</div><svg class="r" style="left:291px;top:443px;" width="11" height="11" viewBox="0 0 11 11"><path d="M6.5 1 L10 4.5 M7.8 2.3 L4.3 5.2 M8.7 3.2 L5.8 6.7 M2.2 4.6 L6.4 8.8 M4.2 6.8 L0.8 10.2" fill="none" stroke="#8c8c8c" stroke-width="1.1" stroke-linecap="round"/></svg><svg class="r" style="left:395px;top:443px;" width="11" height="11" viewBox="0 0 11 11"><path d="M6.5 1 L10 4.5 M7.8 2.3 L4.3 5.2 M8.7 3.2 L5.8 6.7 M2.2 4.6 L6.4 8.8 M4.2 6.8 L0.8 10.2" fill="none" stroke="#8c8c8c" stroke-width="1.1" stroke-linecap="round"/></svg><svg class="r" style="left:485px;top:443px;" width="11" height="11" viewBox="0 0 11 11"><path d="M6.5 1 L10 4.5 M7.8 2.3 L4.3 5.2 M8.7 3.2 L5.8 6.7 M2.2 4.6 L6.4 8.8 M4.2 6.8 L0.8 10.2" fill="none" stroke="#8c8c8c" stroke-width="1.1" stroke-linecap="round"/></svg><svg class="r" style="left:598px;top:443px;" width="11" height="11" viewBox="0 0 11 11"><path d="M6.5 1 L10 4.5 M7.8 2.3 L4.3 5.2 M8.7 3.2 L5.8 6.7 M2.2 4.6 L6.4 8.8 M4.2 6.8 L0.8 10.2" fill="none" stroke="#8c8c8c" stroke-width="1.1" stroke-linecap="round"/></svg><svg class="r" style="left:708px;top:443px;" width="11" height="11" viewBox="0 0 11 11"><path d="M6.5 1 L10 4.5 M7.8 2.3 L4.3 5.2 M8.7 3.2 L5.8 6.7 M2.2 4.6 L6.4 8.8 M4.2 6.8 L0.8 10.2" fill="none" stroke="#8c8c8c" stroke-width="1.1" stroke-linecap="round"/></svg><svg class="r" style="left:848px;top:443px;" width="11" height="11" viewBox="0 0 11 11"><path d="M6.5 1 L10 4.5 M7.8 2.3 L4.3 5.2 M8.7 3.2 L5.8 6.7 M2.2 4.6 L6.4 8.8 M4.2 6.8 L0.8 10.2" fill="none" stroke="#8c8c8c" stroke-width="1.1" stroke-linecap="round"/></svg><svg class="r" style="left:986px;top:443px;" width="11" height="11" viewBox="0 0 11 11"><path d="M6.5 1 L10 4.5 M7.8 2.3 L4.3 5.2 M8.7 3.2 L5.8 6.7 M2.2 4.6 L6.4 8.8 M4.2 6.8 L0.8 10.2" fill="none" stroke="#8c8c8c" stroke-width="1.1" stroke-linecap="round"/></svg><svg class="r" style="left:161px;top:443px;" width="12" height="11" viewBox="0 0 12 11"><path d="M0.5 5.5 H4.3 M4.5 2 V9.5 M4.5 3.2 L11 2.2 V8.8 L4.5 7.8" fill="none" stroke="#9c9c9c" stroke-width="1.1" stroke-linejoin="round"/></svg><div class="r" style="left:1px;top:469px;width:1012px;height:77px;background:#fff;"></div><div class="r" style="left:1px;top:468px;width:1012px;height:1px;background:#d9d9d9;"></div><div class="r" style="left:19px;top:470px;width:154px;height:18px;background:#f4f4f4;"></div><div class="r" style="left:180px;top:470px;width:123px;height:18px;background:#f4f4f4;"></div><div class="r" style="left:303px;top:470px;width:55px;height:18px;background:#f4f4f4;"></div><div class="r" style="left:617px;top:470px;width:54px;height:18px;background:#f4f4f4;"></div><div class="r" style="left:865px;top:470px;width:132px;height:18px;background:#f4f4f4;"></div><div class="r" style="left:19px;top:488px;width:994px;height:1px;background:#dde5ee;"></div><div class="r" style="left:303px;top:469px;width:1px;height:20px;background:#dde5ee;"></div><div class="r" style="left:412px;top:469px;width:1px;height:20px;background:#dde5ee;"></div><div class="r" style="left:617px;top:469px;width:1px;height:20px;background:#dde5ee;"></div><div class="r" style="left:726px;top:469px;width:1px;height:20px;background:#dde5ee;"></div><div class="r" style="left:865px;top:469px;width:1px;height:20px;background:#dde5ee;"></div><div class="r" style="left:997px;top:469px;width:1px;height:20px;background:#dde5ee;"></div><div class="r" style="left:19px;top:489px;width:154px;height:18px;background:#f4f4f4;"></div><div class="r" style="left:180px;top:489px;width:123px;height:18px;background:#f4f4f4;"></div><div class="r" style="left:303px;top:489px;width:55px;height:18px;background:#f4f4f4;"></div><div class="r" style="left:617px;top:489px;width:54px;height:18px;background:#f4f4f4;"></div><div class="r" style="left:865px;top:489px;width:132px;height:18px;background:#f4f4f4;"></div><div class="r" style="left:19px;top:507px;width:994px;height:1px;background:#dde5ee;"></div><div class="r" style="left:303px;top:488px;width:1px;height:20px;background:#dde5ee;"></div><div class="r" style="left:412px;top:488px;width:1px;height:20px;background:#dde5ee;"></div><div class="r" style="left:617px;top:488px;width:1px;height:20px;background:#dde5ee;"></div><div class="r" style="left:726px;top:488px;width:1px;height:20px;background:#dde5ee;"></div><div class="r" style="left:865px;top:488px;width:1px;height:20px;background:#dde5ee;"></div><div class="r" style="left:997px;top:488px;width:1px;height:20px;background:#dde5ee;"></div><div class="r" style="left:19px;top:508px;width:154px;height:18px;background:#f4f4f4;"></div><div class="r" style="left:180px;top:508px;width:123px;height:18px;background:#f4f4f4;"></div><div class="r" style="left:303px;top:508px;width:55px;height:18px;background:#f4f4f4;"></div><div class="r" style="left:617px;top:508px;width:54px;height:18px;background:#f4f4f4;"></div><div class="r" style="left:865px;top:508px;width:132px;height:18px;background:#f4f4f4;"></div><div class="r" style="left:19px;top:526px;width:994px;height:1px;background:#dde5ee;"></div><div class="r" style="left:303px;top:507px;width:1px;height:20px;background:#dde5ee;"></div><div class="r" style="left:412px;top:507px;width:1px;height:20px;background:#dde5ee;"></div><div class="r" style="left:617px;top:507px;width:1px;height:20px;background:#dde5ee;"></div><div class="r" style="left:726px;top:507px;width:1px;height:20px;background:#dde5ee;"></div><div class="r" style="left:865px;top:507px;width:1px;height:20px;background:#dde5ee;"></div><div class="r" style="left:997px;top:507px;width:1px;height:20px;background:#dde5ee;"></div><div class="r" style="left:19px;top:527px;width:154px;height:18px;background:#f4f4f4;"></div><div class="r" style="left:180px;top:527px;width:123px;height:18px;background:#f4f4f4;"></div><div class="r" style="left:303px;top:527px;width:55px;height:18px;background:#f4f4f4;"></div><div class="r" style="left:617px;top:527px;width:54px;height:18px;background:#f4f4f4;"></div><div class="r" style="left:865px;top:527px;width:132px;height:18px;background:#f4f4f4;"></div><div class="r" style="left:19px;top:545px;width:994px;height:1px;background:#dde5ee;"></div><div class="r" style="left:303px;top:526px;width:1px;height:20px;background:#dde5ee;"></div><div class="r" style="left:412px;top:526px;width:1px;height:20px;background:#dde5ee;"></div><div class="r" style="left:617px;top:526px;width:1px;height:20px;background:#dde5ee;"></div><div class="r" style="left:726px;top:526px;width:1px;height:20px;background:#dde5ee;"></div><div class="r" style="left:865px;top:526px;width:1px;height:20px;background:#dde5ee;"></div><div class="r" style="left:997px;top:526px;width:1px;height:20px;background:#dde5ee;"></div><svg class="r" style="left:4px;top:475px;" width="6" height="8" viewBox="0 0 6 8"><path d="M0.5 0.5 L5 4 L0.5 7.5 Z" fill="#ececec"/></svg><svg class="r" style="left:24px;top:470.5px;" width="16" height="17" viewBox="0 0 16 17"><g fill="none" stroke="#555" stroke-width="1.1"><ellipse cx="4.7" cy="2.6" rx="4" ry="1.7"/><path d="M0.7 2.6 V10.3 Q2.5 12 6.5 11.6 M8.7 2.6 V7.6 M0.7 5.6 Q4.7 8.2 8.7 5.6 M0.7 8.3 Q4.7 10.9 8.7 8.3"/><ellipse cx="8.7" cy="13.4" rx="3.1" ry="2" transform="rotate(-45 8.7 13.4)"/><ellipse cx="12.2" cy="9.9" rx="3.1" ry="2" transform="rotate(-45 12.2 9.9)"/></g></svg><div class="t" style="top:472px;font-size:12.0px;line-height:17px;color:#333;left:44px;transform-origin:0 0;transform:scaleX(0.9167);">Linked with master data</div><div class="t" style="top:472px;font-size:12.0px;line-height:17px;color:#333;left:184px;transform-origin:0 0;transform:scaleX(0.9167);">1/Machine</div><div class="t" style="top:472px;font-size:11.5px;line-height:16px;color:#333;left:276px;width:60px;text-align:right;transform-origin:100% 0;transform:scaleX(0.9130);">45.00</div><svg class="r" style="left:339.5px;top:471px;" width="16" height="16" viewBox="0 0 16 16"><g fill="none" stroke="#666" stroke-width="1.15"><ellipse cx="5.2" cy="9.6" rx="5" ry="3.1" transform="rotate(-45 5.2 9.6)"/><ellipse cx="10" cy="4.8" rx="5" ry="3.1" transform="rotate(-45 10 4.8)"/></g></svg><div class="t" style="top:472px;font-size:11.5px;line-height:16px;color:#333;left:361px;transform-origin:0 0;transform:scaleX(0.9130);">s/Pcs</div><svg class="r" style="left:4px;top:494px;" width="6" height="8" viewBox="0 0 6 8"><path d="M0.5 0.5 L5 4 L0.5 7.5 Z" fill="#ececec"/></svg><svg class="r" style="left:24px;top:489.5px;" width="16" height="17" viewBox="0 0 16 17"><g fill="none" stroke="#555" stroke-width="1.1"><ellipse cx="4.7" cy="2.6" rx="4" ry="1.7"/><path d="M0.7 2.6 V10.3 Q2.5 12 6.5 11.6 M8.7 2.6 V7.6 M0.7 5.6 Q4.7 8.2 8.7 5.6 M0.7 8.3 Q4.7 10.9 8.7 8.3"/><ellipse cx="8.7" cy="13.4" rx="3.1" ry="2" transform="rotate(-45 8.7 13.4)"/><ellipse cx="12.2" cy="9.9" rx="3.1" ry="2" transform="rotate(-45 12.2 9.9)"/></g></svg><div class="t" style="top:491px;font-size:12.0px;line-height:17px;color:#333;left:44px;transform-origin:0 0;transform:scaleX(0.9167);">Linked with master data</div><div class="t" style="top:491px;font-size:12.0px;line-height:17px;color:#333;left:184px;transform-origin:0 0;transform:scaleX(0.9167);">2/Direct labor</div><div class="t" style="top:491px;font-size:11.5px;line-height:16px;color:#333;left:276px;width:60px;text-align:right;transform-origin:100% 0;transform:scaleX(0.9130);">45.00</div><svg class="r" style="left:339.5px;top:490px;" width="16" height="16" viewBox="0 0 16 16"><g fill="none" stroke="#666" stroke-width="1.15"><ellipse cx="5.2" cy="9.6" rx="5" ry="3.1" transform="rotate(-45 5.2 9.6)"/><ellipse cx="10" cy="4.8" rx="5" ry="3.1" transform="rotate(-45 10 4.8)"/></g></svg><div class="t" style="top:491px;font-size:11.5px;line-height:16px;color:#333;left:361px;transform-origin:0 0;transform:scaleX(0.9130);">s/Pcs</div><svg class="r" style="left:4px;top:513px;" width="6" height="8" viewBox="0 0 6 8"><path d="M0.5 0.5 L5 4 L0.5 7.5 Z" fill="#ececec"/></svg><svg class="r" style="left:24px;top:508.5px;" width="16" height="17" viewBox="0 0 16 17"><g fill="none" stroke="#555" stroke-width="1.1"><ellipse cx="4.7" cy="2.6" rx="4" ry="1.7"/><path d="M0.7 2.6 V10.3 Q2.5 12 6.5 11.6 M8.7 2.6 V7.6 M0.7 5.6 Q4.7 8.2 8.7 5.6 M0.7 8.3 Q4.7 10.9 8.7 8.3"/><ellipse cx="8.7" cy="13.4" rx="3.1" ry="2" transform="rotate(-45 8.7 13.4)"/><ellipse cx="12.2" cy="9.9" rx="3.1" ry="2" transform="rotate(-45 12.2 9.9)"/></g></svg><div class="t" style="top:510px;font-size:12.0px;line-height:17px;color:#333;left:44px;transform-origin:0 0;transform:scaleX(0.9167);">Linked with master data</div><div class="t" style="top:510px;font-size:12.0px;line-height:17px;color:#333;left:184px;transform-origin:0 0;transform:scaleX(0.9167);">3/Machine set-up</div><div class="t" style="top:510px;font-size:11.5px;line-height:16px;color:#333;left:276px;width:60px;text-align:right;transform-origin:100% 0;transform:scaleX(0.9130);">45.00</div><svg class="r" style="left:339.5px;top:509px;" width="16" height="16" viewBox="0 0 16 16"><g fill="none" stroke="#666" stroke-width="1.15"><ellipse cx="5.2" cy="9.6" rx="5" ry="3.1" transform="rotate(-45 5.2 9.6)"/><ellipse cx="10" cy="4.8" rx="5" ry="3.1" transform="rotate(-45 10 4.8)"/></g></svg><div class="t" style="top:510px;font-size:11.5px;line-height:16px;color:#333;left:361px;transform-origin:0 0;transform:scaleX(0.9130);">s/Pcs</div><svg class="r" style="left:4px;top:532px;" width="6" height="8" viewBox="0 0 6 8"><path d="M0.5 0.5 L5 4 L0.5 7.5 Z" fill="#ececec"/></svg><svg class="r" style="left:24px;top:527.5px;" width="16" height="17" viewBox="0 0 16 17"><g fill="none" stroke="#555" stroke-width="1.1"><ellipse cx="4.7" cy="2.6" rx="4" ry="1.7"/><path d="M0.7 2.6 V10.3 Q2.5 12 6.5 11.6 M8.7 2.6 V7.6 M0.7 5.6 Q4.7 8.2 8.7 5.6 M0.7 8.3 Q4.7 10.9 8.7 8.3"/><ellipse cx="8.7" cy="13.4" rx="3.1" ry="2" transform="rotate(-45 8.7 13.4)"/><ellipse cx="12.2" cy="9.9" rx="3.1" ry="2" transform="rotate(-45 12.2 9.9)"/></g></svg><div class="t" style="top:529px;font-size:12.0px;line-height:17px;color:#333;left:44px;transform-origin:0 0;transform:scaleX(0.9167);">Linked with master data</div><div class="t" style="top:529px;font-size:12.0px;line-height:17px;color:#333;left:184px;transform-origin:0 0;transform:scaleX(0.9167);">4/Direct labor set-up</div><div class="t" style="top:529px;font-size:11.5px;line-height:16px;color:#333;left:276px;width:60px;text-align:right;transform-origin:100% 0;transform:scaleX(0.9130);">45.00</div><svg class="r" style="left:339.5px;top:528px;" width="16" height="16" viewBox="0 0 16 16"><g fill="none" stroke="#666" stroke-width="1.15"><ellipse cx="5.2" cy="9.6" rx="5" ry="3.1" transform="rotate(-45 5.2 9.6)"/><ellipse cx="10" cy="4.8" rx="5" ry="3.1" transform="rotate(-45 10 4.8)"/></g></svg><div class="t" style="top:529px;font-size:11.5px;line-height:16px;color:#333;left:361px;transform-origin:0 0;transform:scaleX(0.9130);">s/Pcs</div><div class="r" style="left:413px;top:469px;width:84px;height:20px;background:#fff;border:2px solid #0a7c0a;box-sizing:border-box;"></div><div class="r" style="left:497px;top:469px;width:75px;height:20px;background:#f4f4f4;border:2px solid #0a7c0a;box-sizing:border-box;"></div><div class="r" style="left:726px;top:469px;width:62px;height:20px;background:#f4f4f4;border:2px solid #0a7c0a;box-sizing:border-box;"></div><div class="r" style="left:413px;top:488px;width:84px;height:20px;background:#fff;border:2px solid #0a7c0a;box-sizing:border-box;"></div><div class="r" style="left:497px;top:488px;width:75px;height:20px;background:#f4f4f4;border:2px solid #0a7c0a;box-sizing:border-box;"></div><div class="r" style="left:726px;top:488px;width:62px;height:20px;background:#f4f4f4;border:2px solid #0a7c0a;box-sizing:border-box;"></div><div class="r" style="left:413px;top:507px;width:84px;height:20px;background:#fff;border:2px solid #0a7c0a;box-sizing:border-box;"></div><div class="r" style="left:497px;top:507px;width:75px;height:20px;background:#f4f4f4;border:2px solid #0a7c0a;box-sizing:border-box;"></div><div class="r" style="left:726px;top:507px;width:62px;height:20px;background:#f4f4f4;border:2px solid #0a7c0a;box-sizing:border-box;"></div><div class="r" style="left:413px;top:526px;width:84px;height:20px;background:#fff;border:2px solid #0a7c0a;box-sizing:border-box;"></div><div class="r" style="left:497px;top:526px;width:75px;height:20px;background:#f4f4f4;border:2px solid #0a7c0a;box-sizing:border-box;"></div><div class="r" style="left:726px;top:526px;width:62px;height:20px;background:#f4f4f4;border:2px solid #0a7c0a;box-sizing:border-box;"></div><div class="t" style="top:472px;font-size:11.5px;line-height:16px;color:#333;left:416px;width:60px;text-align:right;transform-origin:100% 0;transform:scaleX(0.9130);">1.00</div><svg class="r" style="left:478.5px;top:471.8px;" width="14.4" height="15.3" viewBox="0 0 16 17"><g fill="none" stroke="#666" stroke-width="1.1"><ellipse cx="4.7" cy="2.6" rx="4" ry="1.7"/><path d="M0.7 2.6 V10.3 Q2.5 12 6.5 11.6 M8.7 2.6 V7.6 M0.7 5.6 Q4.7 8.2 8.7 5.6 M0.7 8.3 Q4.7 10.9 8.7 8.3"/><ellipse cx="8.7" cy="13.4" rx="3.1" ry="2" transform="rotate(-45 8.7 13.4)"/><ellipse cx="12.2" cy="9.9" rx="3.1" ry="2" transform="rotate(-45 12.2 9.9)"/></g></svg><div class="t" style="top:472px;font-size:11.5px;line-height:16px;color:#333;left:505.5px;width:60px;text-align:right;transform-origin:100% 0;transform:scaleX(0.9130);">120.00</div><div class="t" style="top:472px;font-size:11.5px;line-height:16px;color:#333;left:574px;transform-origin:0 0;transform:scaleX(0.9130);">$/h</div><div class="t" style="top:472px;font-size:11.5px;line-height:16px;color:#333;left:606px;width:60px;text-align:right;transform-origin:100% 0;transform:scaleX(0.9130);">1.50</div><div class="t" style="top:472px;font-size:11.5px;line-height:16px;color:#333;left:674px;transform-origin:0 0;transform:scaleX(0.9130);">$/Pcs</div><div class="t" style="top:472px;font-size:11.5px;line-height:16px;color:#333;left:723px;width:60px;text-align:right;transform-origin:100% 0;transform:scaleX(0.9130);">25.00</div><div class="t" style="top:472px;font-size:11.5px;line-height:16px;color:#333;left:791px;transform-origin:0 0;transform:scaleX(0.9130);">kg CO2e/h</div><div class="t" style="top:472px;font-size:11.5px;line-height:16px;color:#333;left:933px;width:60px;text-align:right;transform-origin:100% 0;transform:scaleX(0.9130);">0.31</div><div class="t" style="top:491px;font-size:11.5px;line-height:16px;color:#333;left:416px;width:60px;text-align:right;transform-origin:100% 0;transform:scaleX(0.9130);">2.00</div><svg class="r" style="left:478.5px;top:490.8px;" width="14.4" height="15.3" viewBox="0 0 16 17"><g fill="none" stroke="#666" stroke-width="1.1"><ellipse cx="4.7" cy="2.6" rx="4" ry="1.7"/><path d="M0.7 2.6 V10.3 Q2.5 12 6.5 11.6 M8.7 2.6 V7.6 M0.7 5.6 Q4.7 8.2 8.7 5.6 M0.7 8.3 Q4.7 10.9 8.7 8.3"/><ellipse cx="8.7" cy="13.4" rx="3.1" ry="2" transform="rotate(-45 8.7 13.4)"/><ellipse cx="12.2" cy="9.9" rx="3.1" ry="2" transform="rotate(-45 12.2 9.9)"/></g></svg><div class="t" style="top:491px;font-size:11.5px;line-height:16px;color:#333;left:505.5px;width:60px;text-align:right;transform-origin:100% 0;transform:scaleX(0.9130);">60.00</div><div class="t" style="top:491px;font-size:11.5px;line-height:16px;color:#333;left:574px;transform-origin:0 0;transform:scaleX(0.9130);">$/h</div><div class="t" style="top:491px;font-size:11.5px;line-height:16px;color:#333;left:606px;width:60px;text-align:right;transform-origin:100% 0;transform:scaleX(0.9130);">1.50</div><div class="t" style="top:491px;font-size:11.5px;line-height:16px;color:#333;left:674px;transform-origin:0 0;transform:scaleX(0.9130);">$/Pcs</div><div class="t" style="top:491px;font-size:11.5px;line-height:16px;color:#333;left:723px;width:60px;text-align:right;transform-origin:100% 0;transform:scaleX(0.9130);">0.00</div><div class="t" style="top:491px;font-size:11.5px;line-height:16px;color:#333;left:791px;transform-origin:0 0;transform:scaleX(0.9130);">kg CO2e/h</div><div class="t" style="top:491px;font-size:11.5px;line-height:16px;color:#333;left:933px;width:60px;text-align:right;transform-origin:100% 0;transform:scaleX(0.9130);">0.00</div><div class="t" style="top:510px;font-size:11.5px;line-height:16px;color:#333;left:416px;width:60px;text-align:right;transform-origin:100% 0;transform:scaleX(0.9130);">1.00</div><svg class="r" style="left:478.5px;top:509.8px;" width="14.4" height="15.3" viewBox="0 0 16 17"><g fill="none" stroke="#666" stroke-width="1.1"><ellipse cx="4.7" cy="2.6" rx="4" ry="1.7"/><path d="M0.7 2.6 V10.3 Q2.5 12 6.5 11.6 M8.7 2.6 V7.6 M0.7 5.6 Q4.7 8.2 8.7 5.6 M0.7 8.3 Q4.7 10.9 8.7 8.3"/><ellipse cx="8.7" cy="13.4" rx="3.1" ry="2" transform="rotate(-45 8.7 13.4)"/><ellipse cx="12.2" cy="9.9" rx="3.1" ry="2" transform="rotate(-45 12.2 9.9)"/></g></svg><div class="t" style="top:510px;font-size:11.5px;line-height:16px;color:#333;left:505.5px;width:60px;text-align:right;transform-origin:100% 0;transform:scaleX(0.9130);">120.00</div><div class="t" style="top:510px;font-size:11.5px;line-height:16px;color:#333;left:574px;transform-origin:0 0;transform:scaleX(0.9130);">$/h</div><div class="t" style="top:510px;font-size:11.5px;line-height:16px;color:#333;left:606px;width:60px;text-align:right;transform-origin:100% 0;transform:scaleX(0.9130);">1.50</div><div class="t" style="top:510px;font-size:11.5px;line-height:16px;color:#333;left:674px;transform-origin:0 0;transform:scaleX(0.9130);">$/Pcs</div><div class="t" style="top:510px;font-size:11.5px;line-height:16px;color:#333;left:723px;width:60px;text-align:right;transform-origin:100% 0;transform:scaleX(0.9130);">25.00</div><div class="t" style="top:510px;font-size:11.5px;line-height:16px;color:#333;left:791px;transform-origin:0 0;transform:scaleX(0.9130);">kg CO2e/h</div><div class="t" style="top:510px;font-size:11.5px;line-height:16px;color:#333;left:933px;width:60px;text-align:right;transform-origin:100% 0;transform:scaleX(0.9130);">0.31</div><div class="t" style="top:529px;font-size:11.5px;line-height:16px;color:#333;left:416px;width:60px;text-align:right;transform-origin:100% 0;transform:scaleX(0.9130);">2.00</div><svg class="r" style="left:478.5px;top:528.8px;" width="14.4" height="15.3" viewBox="0 0 16 17"><g fill="none" stroke="#666" stroke-width="1.1"><ellipse cx="4.7" cy="2.6" rx="4" ry="1.7"/><path d="M0.7 2.6 V10.3 Q2.5 12 6.5 11.6 M8.7 2.6 V7.6 M0.7 5.6 Q4.7 8.2 8.7 5.6 M0.7 8.3 Q4.7 10.9 8.7 8.3"/><ellipse cx="8.7" cy="13.4" rx="3.1" ry="2" transform="rotate(-45 8.7 13.4)"/><ellipse cx="12.2" cy="9.9" rx="3.1" ry="2" transform="rotate(-45 12.2 9.9)"/></g></svg><div class="t" style="top:529px;font-size:11.5px;line-height:16px;color:#333;left:505.5px;width:60px;text-align:right;transform-origin:100% 0;transform:scaleX(0.9130);">60.00</div><div class="t" style="top:529px;font-size:11.5px;line-height:16px;color:#333;left:574px;transform-origin:0 0;transform:scaleX(0.9130);">$/h</div><div class="t" style="top:529px;font-size:11.5px;line-height:16px;color:#333;left:606px;width:60px;text-align:right;transform-origin:100% 0;transform:scaleX(0.9130);">1.50</div><div class="t" style="top:529px;font-size:11.5px;line-height:16px;color:#333;left:674px;transform-origin:0 0;transform:scaleX(0.9130);">$/Pcs</div><div class="t" style="top:529px;font-size:11.5px;line-height:16px;color:#333;left:723px;width:60px;text-align:right;transform-origin:100% 0;transform:scaleX(0.9130);">0.00</div><div class="t" style="top:529px;font-size:11.5px;line-height:16px;color:#333;left:791px;transform-origin:0 0;transform:scaleX(0.9130);">kg CO2e/h</div><div class="t" style="top:529px;font-size:11.5px;line-height:16px;color:#333;left:933px;width:60px;text-align:right;transform-origin:100% 0;transform:scaleX(0.9130);">0.00</div><div class="r" style="left:617px;top:553px;width:54px;height:20px;background:#eaeaea;border:1px solid #c4c4c4;box-sizing:border-box;"></div><div class="t" style="top:556px;font-size:12.0px;line-height:17px;color:#444;left:620px;transform-origin:0 0;transform:scaleX(0.9167);">Σ</div><div class="t" style="top:556px;font-size:11.5px;line-height:16px;color:#333;font-weight:bold;left:606px;width:60px;text-align:right;transform-origin:100% 0;transform:scaleX(0.9130);">6.00</div><div class="r" style="left:866px;top:553px;width:132px;height:20px;background:#eaeaea;border:1px solid #c4c4c4;box-sizing:border-box;"></div><div class="t" style="top:556px;font-size:12.0px;line-height:17px;color:#444;left:869px;transform-origin:0 0;transform:scaleX(0.9167);">Σ</div><div class="t" style="top:556px;font-size:11.5px;line-height:16px;color:#333;font-weight:bold;left:933px;width:60px;text-align:right;transform-origin:100% 0;transform:scaleX(0.9130);">0.63</div>
</body></html>
